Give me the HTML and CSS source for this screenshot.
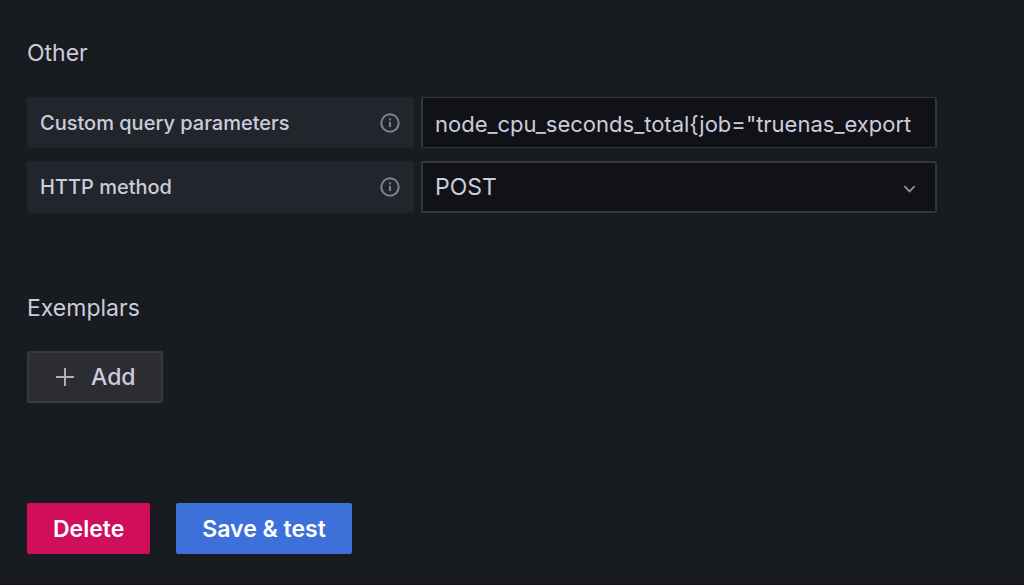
FILE: index.html
```
<!DOCTYPE html>
<html lang="en">
<head>
<meta charset="utf-8">
<title>Data source settings</title>
<link rel="stylesheet" href="styles.css">
</head>
<body>
<main class="settings">
  <section class="section">
    <h2 class="section-title">Other</h2>
    <div class="field">
      <div class="field-label">
        <label for="params">Custom query parameters</label>
        <svg class="info" viewBox="0 0 20 20" aria-hidden="true"><circle cx="10" cy="10" r="8.7"/><path d="M10 9v5M10 5.500v2"/></svg>
      </div>
      <input class="control text-control" id="params" type="text" value="node_cpu_seconds_total{job=&quot;truenas_export">
    </div>
    <div class="field">
      <div class="field-label">
        <label for="method">HTTP method</label>
        <svg class="info" viewBox="0 0 20 20" aria-hidden="true"><circle cx="10" cy="10" r="8.7"/><path d="M10 9v5M10 5.500v2"/></svg>
      </div>
      <div class="select-wrap">
        <select class="control" id="method"><option>POST</option><option>GET</option></select>
        <svg class="chevron" viewBox="0 0 14 8" aria-hidden="true"><path d="M1.5 1l5.500 5.500L12.500 1"/></svg>
      </div>
    </div>
  </section>
  <section class="section exemplars">
    <h2 class="section-title">Exemplars</h2>
    <button class="button secondary" type="button">
      <svg class="plus" viewBox="0 0 18 18" aria-hidden="true"><path d="M9 0v18M0 9h18"/></svg>
      Add
    </button>
  </section>
  <div class="actions">
    <button class="button danger" type="button">Delete</button>
    <button class="button primary" type="button">Save &amp; test</button>
  </div>
</main>
</body>
</html>
```
FILE: styles.css
```
* { box-sizing: border-box; }

body {
  margin: 0;
  background: #181b1f;
  color: #ccccdc;
  font-family: Inter, "Liberation Sans", sans-serif;
}

.settings {
  min-height: 100vh;
  padding: 38px 87px 30px 27px;
  border-bottom: 1px solid #111217;
}

.section-title {
  margin: 0 0 28px;
  font-size: 23px;
  line-height: 30px;
  font-weight: 400;
}

.field {
  display: grid;
  grid-template-columns: 387px minmax(0, 1fr);
  gap: 7px;
  margin-top: 13px;
}

.section-title + .field { margin-top: 29px; }

.field-label {
  display: flex;
  align-items: center;
  justify-content: space-between;
  padding: 0 14px 0 13px;
  background: #22252b;
  border-radius: 2px;
  font-size: 20px;
  font-weight: 500;
}

.info {
  width: 20px;
  height: 20px;
  fill: none;
  stroke: #81838c;
  stroke-width: 2;
}

.control {
  display: block;
  width: 100%;
  height: 52px;
  padding: 0 12px;
  border: 2px solid #35363b;
  border-radius: 2px;
  background: #111217;
  color: #ccccdc;
  font: 400 23px/30px Inter, "Liberation Sans", sans-serif;
  appearance: none;
}

.text-control {
  height: 51px;
  padding-top: 3px;
  border-width: 1px 2px;
  font-size: 22px;
}

.select-wrap { position: relative; }

.chevron {
  position: absolute;
  right: 21px;
  top: 24px;
  width: 13px;
  height: 8px;
  fill: none;
  stroke: #8c8d98;
  stroke-width: 2;
  pointer-events: none;
}

.exemplars { padding-top: 80px; }

.button {
  display: inline-flex;
  align-items: center;
  height: 51px;
  padding: 0 26px;
  border: 0;
  border-radius: 2px;
  color: #fff;
  font: 600 23px/30px Inter, "Liberation Sans", sans-serif;
}

.secondary {
  gap: 17px;
  height: 52px;
  padding: 0 25px 0 27px;
  border: 2px solid #38393e;
  background: #2c2d32;
  color: #ccccdc;
  font-weight: 500;
}

.plus {
  width: 18px;
  height: 18px;
  fill: none;
  stroke: #acacba;
  stroke-width: 2;
}

.actions {
  display: flex;
  gap: 26px;
  padding-top: 100px;
}

.danger { background: #d10e5c; }
.primary { background: #3d71d9; }
```
